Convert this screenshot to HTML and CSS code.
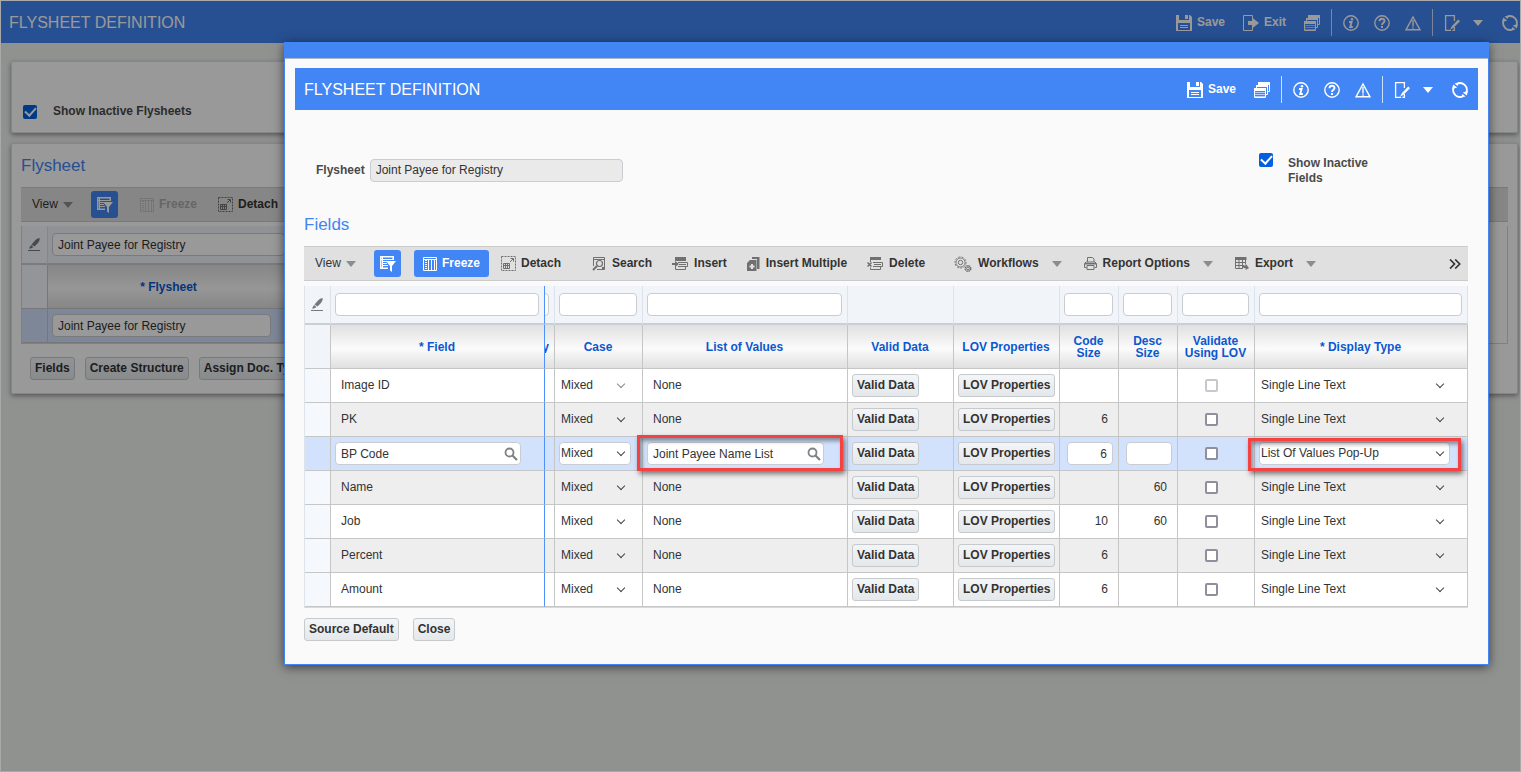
FILE: index.html
```html
<!DOCTYPE html>
<html lang="en">
<head>
    <meta charset="UTF-8">
    <meta name="viewport" content="width=device-width, initial-scale=1.0">
    <title>Flysheet Definition</title>
    <link rel="stylesheet" href="styles.css">
</head>
<body>
    <!-- Icon set -->
    <svg class="icon-defs" aria-hidden="true">
        <symbol id="i-save" viewBox="0 0 16 16">
            <path fill="currentColor" fill-rule="evenodd" d="M0 0h14l2 2v14H0zM3 0v5h10V0h-1v4H9V0zM2 8v7h12V8z"/>
            <path fill="currentColor" d="M4 10h8v1H4zM4 12h8v1H4z"/>
        </symbol>
        <symbol id="i-exit" viewBox="0 0 16 16">
            <path fill="none" stroke="currentColor" d="M9.500 4V.5h-9v15h9V12"/>
            <path fill="currentColor" d="M5 6h4V2.500l7 5.500-7 5.500V10H5z"/>
        </symbol>
        <symbol id="i-windows" viewBox="0 0 16 16">
            <path fill="none" stroke="currentColor" d="M4.500 3V.5h11v9H14M2.500 6V3.500h11v9H12M.5 6.500h11v9H.5z"/>
            <path fill="currentColor" d="M4 0h12v3H4zM2 3h12v2H2zM0 6h12v3H0z"/>
            <path fill="currentColor" opacity=".6" d="M1 10h10v1H1zM1 12h10v1H1zM1 14h10v1H1z"/>
        </symbol>
        <symbol id="i-info" viewBox="0 0 16 16">
            <circle cx="8" cy="8" r="7.200" fill="none" stroke="currentColor" stroke-width="1.400"/>
            <circle cx="9" cy="4.200" r="1.300" fill="currentColor"/>
            <path fill="none" stroke="currentColor" stroke-width="1.900" d="M6 7h2.600l-1.400 5h2.600"/>
        </symbol>
        <symbol id="i-help" viewBox="0 0 16 16">
            <circle cx="8" cy="8" r="7.200" fill="none" stroke="currentColor" stroke-width="1.400"/>
            <path fill="none" stroke="currentColor" stroke-width="1.900" d="M5.500 6.200C5.500 3 10.500 3 10.500 6 10.500 7.800 8 7.700 8 10"/>
            <path fill="currentColor" d="M7 11h2v2H7z"/>
        </symbol>
        <symbol id="i-warn" viewBox="0 0 16 16">
            <path fill="none" stroke="currentColor" stroke-width="1.400" d="M8 2L15 14.800H1z"/>
            <path fill="currentColor" d="M7.300 5h1.400v6.500H7.300zM7.300 12.300h1.400v1.500H7.300z"/>
        </symbol>
        <symbol id="i-edit" viewBox="0 0 16 16">
            <path fill="none" stroke="currentColor" stroke-width="1.300" d="M10.400 6V.7H1.600v14.600h5.500M10.400 12v3.300h-2"/>
            <path fill="currentColor" d="M14.200 4.500L16 6.200l-6.500 6.500-3.500 2 2-3.700z"/>
        </symbol>
        <symbol id="i-refresh" viewBox="0 0 16 16">
            <path fill="none" stroke="currentColor" stroke-width="1.800" d="M5 1.800A6.800 6.800 0 0 1 14.300 10.500M11 14.200A6.800 6.800 0 0 1 1.700 5.500"/>
            <path fill="currentColor" d="M0 7l1.200-4.500 4 3zM16 9l-1.200 4.500-4-3zM2.500 1.500L7 .5 5.500 4zM13.500 14.500L9 15.500l1.500-3.500z"/>
        </symbol>
        <symbol id="i-filter" viewBox="0 0 16 16">
            <path fill="none" stroke="currentColor" stroke-width="1.500" d="M13.200 4V.8H.8v11.400H8"/>
            <path fill="currentColor" d="M1 3h12v1H1zM3 5h5v1H3zM3 7h4v1H3zM3 9h5v1H3zM2 1h1v11H2zM6 5h10l-4 5v6l-2-1.500V10z"/>
        </symbol>
        <symbol id="i-freeze" viewBox="0 0 14 14">
            <path fill="none" stroke="currentColor" d="M.5.5h13v13H.5zM.5 2.500h13M5.500 3v10M8.500 3v10M11.500 3v10"/>
            <path fill="none" stroke="currentColor" stroke-width="2" stroke-dasharray="1 1" d="M3 3v10"/>
        </symbol>
        <symbol id="i-detach" viewBox="0 0 15 15">
            <path fill="none" stroke="currentColor" stroke-dasharray="2 1" d="M.5.5h14v14H.5z"/>
            <path fill="none" stroke="currentColor" d="M2.500 7.500h6v5h-6zM3 9.500h6M4.500 8v5M6.500 8v5M9 6l3-3M9.500 2.500h3v3"/>
        </symbol>
        <symbol id="i-search" viewBox="0 0 14 15">
            <path fill="none" stroke="currentColor" d="M1.500 10V1.500h11v12H5M2 3.500h10"/>
            <circle cx="7.500" cy="7.500" r="3" fill="none" stroke="currentColor" stroke-width="1.200"/>
            <path fill="none" stroke="currentColor" stroke-width="2" d="M5 10l-4 4"/>
            <path fill="currentColor" d="M10 11h2v2h-2z"/>
        </symbol>
        <symbol id="i-insert" viewBox="0 0 16 14">
            <path fill="currentColor" d="M3 0h11v4H3zM0 6h3V4l4 3-4 3V8H0z"/>
            <path fill="none" stroke="currentColor" d="M6 5.500h9.500v4H6M3.500 9v3.500h10V10M7 7.500h7"/>
        </symbol>
        <symbol id="i-multi" viewBox="0 0 13 14">
            <path fill="currentColor" fill-rule="evenodd" d="M5 0h7.500v12H10V2H5zM3 3h6.500v11H0V6zM4 7v1.500H2.500v2H4V12h2v-1.500h1.500v-2H6V7z"/>
        </symbol>
        <symbol id="i-delete" viewBox="0 0 16 14">
            <path fill="currentColor" d="M3 0h11v3H3z"/>
            <path fill="none" stroke="currentColor" d="M6 5.500h9.500v4H6M3.500 10.500v2h10V10M3.500 3v2M7 7.500h7"/>
            <path fill="none" stroke="currentColor" stroke-width="1.500" d="M.5 5.500l4 4M4.500 5.500l-4 4"/>
        </symbol>
        <symbol id="i-gears" viewBox="0 0 18 16">
            <circle cx="6.500" cy="6.500" r="5.500" fill="none" stroke="currentColor" stroke-dasharray="2 1.300"/>
            <circle cx="6.500" cy="6.500" r="4.500" fill="none" stroke="currentColor" stroke-width=".8"/>
            <circle cx="6.500" cy="6.500" r="2.200" fill="none" stroke="currentColor"/>
            <circle cx="14" cy="12.500" r="2.800" fill="none" stroke="currentColor" stroke-width="1.400" stroke-dasharray="1.600 .6"/>
            <circle cx="14" cy="12.500" r="1.400" fill="none" stroke="currentColor"/>
        </symbol>
        <symbol id="i-print" viewBox="0 0 13 13">
            <path fill="none" stroke="currentColor" d="M3.500 5V.5h5l1.500 1.500v3M2.500 10.500h-2v-4l1.500-1.500h9l1.500 1.500v4h-2M3 8.500h7v4H3z"/>
            <path fill="currentColor" d="M1 6h11v1.500H1z"/>
        </symbol>
        <symbol id="i-export" viewBox="0 0 14 13">
            <path fill="none" stroke="currentColor" d="M.5 1v10.500H8M4 2v9.500M7.500 2v9.500M10.500 2v5M1 5.500h10M1 8.500h8"/>
            <path fill="currentColor" d="M0 0h11.500v3H0zM7 8.500h3.500V6.500L14 11l-3.500 2v-2C8.500 11 7.500 10.500 7 8.500z"/>
        </symbol>
        <symbol id="i-pen" viewBox="0 0 12 13">
            <path fill="currentColor" d="M11.500 0c.6 2-.6 4-2 5.500L6.500 8.500l-3-2L7 2.500C8.500 1 10 .2 11.500 0zM3 7l2.500 2-2.500 1.500H1zM0 12h12v1H0z"/>
        </symbol>
        <symbol id="i-lens" viewBox="0 0 14 14">
            <circle cx="5.500" cy="5.500" r="4" fill="none" stroke="currentColor" stroke-width="1.800"/>
            <path stroke="currentColor" stroke-width="2.200" d="M8.500 8.500l4.500 4.500"/>
        </symbol>
        <symbol id="i-more" viewBox="0 0 12 10">
            <path fill="none" stroke="currentColor" stroke-width="1.700" d="M1 .5L5.500 5 1 9.500M6.200.5L10.700 5 6.200 9.500"/>
        </symbol>
    </svg>

    <!-- Main page -->
    <header class="title-bar title-bar-page">
        <h1>FLYSHEET DEFINITION</h1>
        <div class="title-actions">
            <button type="button" class="title-btn title-btn-text"><svg width="16" height="16"><use href="#i-save"/></svg>Save</button>
            <button type="button" class="title-btn title-btn-text"><svg width="16" height="16"><use href="#i-exit"/></svg>Exit</button>
            <button type="button" class="title-btn" aria-label="Windows"><svg width="16" height="16"><use href="#i-windows"/></svg></button>
            <span class="bar-line"></span>
            <button type="button" class="title-btn" aria-label="Information"><svg width="16" height="16"><use href="#i-info"/></svg></button>
            <button type="button" class="title-btn" aria-label="Help"><svg width="16" height="16"><use href="#i-help"/></svg></button>
            <button type="button" class="title-btn" aria-label="Warnings"><svg width="16" height="16"><use href="#i-warn"/></svg></button>
            <span class="bar-line"></span>
            <button type="button" class="title-btn" aria-label="Edit"><svg width="16" height="16"><use href="#i-edit"/></svg><span class="caret"></span></button>
            <button type="button" class="title-btn" aria-label="Refresh"><svg width="16" height="16"><use href="#i-refresh"/></svg></button>
        </div>
    </header>

    <main class="page">
        <section class="panel panel-options">
            <input type="checkbox" id="inactive-flysheets" checked>
            <label for="inactive-flysheets">Show Inactive Flysheets</label>
        </section>

        <section class="panel">
            <h2>Flysheet</h2>
            <div class="toolbar">
                <button type="button" class="tool tool-view">View<span class="caret"></span></button>
                <button type="button" class="tool tool-filter" aria-label="Query by example"><svg width="16" height="16"><use href="#i-filter"/></svg></button>
                <button type="button" class="tool tool-freeze" disabled><svg width="14" height="14"><use href="#i-freeze"/></svg>Freeze</button>
                <button type="button" class="tool"><svg width="15" height="15"><use href="#i-detach"/></svg>Detach</button>
            </div>
            <div class="grid-frame">
                <table class="grid flysheet-grid">
                    <colgroup><col class="w-mark"><col></colgroup>
                    <tr class="filter-row">
                        <td class="mark"><svg width="12" height="13"><use href="#i-pen"/></svg></td>
                        <td><input type="text" class="box" aria-label="Filter flysheet" value="Joint Payee for Registry"></td>
                    </tr>
                    <tr class="head-row">
                        <th class="mark"></th>
                        <th>* Flysheet</th>
                    </tr>
                    <tr class="selected">
                        <td class="mark"></td>
                        <td><input type="text" class="box flysheet-box" aria-label="Flysheet name" value="Joint Payee for Registry"></td>
                    </tr>
                </table>
            </div>
            <div class="panel-buttons">
                <button type="button" class="btn">Fields</button>
                <button type="button" class="btn">Create Structure</button>
                <button type="button" class="btn">Assign Doc. Types</button>
            </div>
        </section>
    </main>

    <div class="overlay"></div>

    <!-- Fields dialog -->
    <div class="dialog" role="dialog" aria-labelledby="dialog-title">
        <div class="dialog-bar"></div>
        <div class="dialog-body">
            <header class="title-bar">
                <h1 id="dialog-title">FLYSHEET DEFINITION</h1>
                <div class="title-actions">
                    <button type="button" class="title-btn title-btn-text"><svg width="16" height="16"><use href="#i-save"/></svg>Save</button>
                    <button type="button" class="title-btn" aria-label="Windows"><svg width="16" height="16"><use href="#i-windows"/></svg></button>
                    <span class="bar-line"></span>
                    <button type="button" class="title-btn" aria-label="Information"><svg width="16" height="16"><use href="#i-info"/></svg></button>
                    <button type="button" class="title-btn" aria-label="Help"><svg width="16" height="16"><use href="#i-help"/></svg></button>
                    <button type="button" class="title-btn" aria-label="Warnings"><svg width="16" height="16"><use href="#i-warn"/></svg></button>
                    <span class="bar-line"></span>
                    <button type="button" class="title-btn" aria-label="Edit"><svg width="16" height="16"><use href="#i-edit"/></svg><span class="caret"></span></button>
                    <button type="button" class="title-btn" aria-label="Refresh"><svg width="16" height="16"><use href="#i-refresh"/></svg></button>
                </div>
            </header>

            <div class="dialog-content">
                <div class="form-row">
                    <label for="flysheet">Flysheet</label>
                    <input type="text" id="flysheet" class="box" value="Joint Payee for Registry" readonly>
                    <div class="inactive">
                        <input type="checkbox" id="inactive-fields" checked>
                        <label for="inactive-fields">Show Inactive Fields</label>
                    </div>
                </div>

                <h2>Fields</h2>
                <div class="toolbar">
                    <button type="button" class="tool tool-view">View<span class="caret"></span></button>
                    <button type="button" class="tool tool-filter" aria-label="Query by example"><svg width="16" height="16"><use href="#i-filter"/></svg></button>
                    <button type="button" class="tool tool-freeze"><svg width="14" height="14"><use href="#i-freeze"/></svg>Freeze</button>
                    <button type="button" class="tool"><svg width="15" height="15"><use href="#i-detach"/></svg>Detach</button>
                    <button type="button" class="tool tool-search"><svg width="14" height="15"><use href="#i-search"/></svg>Search</button>
                    <button type="button" class="tool tool-row"><svg width="16" height="14"><use href="#i-insert"/></svg>Insert</button>
                    <button type="button" class="tool tool-row"><svg width="13" height="14"><use href="#i-multi"/></svg>Insert Multiple</button>
                    <button type="button" class="tool tool-row"><svg width="16" height="14"><use href="#i-delete"/></svg>Delete</button>
                    <button type="button" class="tool tool-menu tool-flows"><svg width="18" height="16"><use href="#i-gears"/></svg>Workflows<span class="caret"></span></button>
                    <button type="button" class="tool tool-menu"><svg width="13" height="13"><use href="#i-print"/></svg>Report Options<span class="caret"></span></button>
                    <button type="button" class="tool tool-menu"><svg width="14" height="13"><use href="#i-export"/></svg>Export<span class="caret"></span></button>
                    <button type="button" class="tool tool-more" aria-label="More"><svg width="12" height="10"><use href="#i-more"/></svg></button>
                </div>

                <table class="grid fields-grid">
                    <colgroup>
                        <col class="w-mark"><col class="w-field"><col class="w-cut"><col class="w-case"><col class="w-lov">
                        <col class="w-button"><col class="w-button"><col class="w-size"><col class="w-size"><col class="w-check"><col>
                    </colgroup>
                    <thead>
                        <tr class="filter-row">
                            <td class="mark"><svg width="12" height="13"><use href="#i-pen"/></svg></td>
                            <td class="frozen"><input type="text" class="box" aria-label="Filter field"></td>
                            <td class="cut"><div class="cut-clip"><input type="text" class="box" aria-label="Filter key"></div></td>
                            <td><input type="text" class="box" aria-label="Filter case"></td>
                            <td><input type="text" class="box" aria-label="Filter list of values"></td>
                            <td></td>
                            <td></td>
                            <td><input type="text" class="box" aria-label="Filter code size"></td>
                            <td><input type="text" class="box" aria-label="Filter desc size"></td>
                            <td><input type="text" class="box" aria-label="Filter validate"></td>
                            <td><input type="text" class="box" aria-label="Filter display type"></td>
                        </tr>
                        <tr class="head-row">
                            <th class="mark"></th>
                            <th class="frozen">* Field</th>
                            <th class="cut"><div class="cut-clip">y</div></th>
                            <th>Case</th>
                            <th>List of Values</th>
                            <th>Valid Data</th>
                            <th>LOV Properties</th>
                            <th>Code Size</th>
                            <th>Desc Size</th>
                            <th>Validate Using LOV</th>
                            <th>* Display Type</th>
                        </tr>
                    </thead>
                    <tbody>
                        <tr>
                            <td class="mark"></td>
                            <td class="frozen"><span class="text">Image ID</span></td>
                            <td></td>
                            <td><span class="pick pick-case pick-off"><select aria-label="Case" disabled><option>Mixed</option></select></span></td>
                            <td><span class="text">None</span></td>
                            <td><button type="button" class="btn">Valid Data</button></td>
                            <td><button type="button" class="btn">LOV Properties</button></td>
                            <td class="num"></td>
                            <td class="num"></td>
                            <td class="check"><input type="checkbox" aria-label="Validate using LOV" disabled></td>
                            <td><span class="pick pick-type"><select aria-label="Display type"><option>Single Line Text</option></select></span></td>
                        </tr>
                        <tr>
                            <td class="mark"></td>
                            <td class="frozen"><span class="text">PK</span></td>
                            <td></td>
                            <td><span class="pick pick-case"><select aria-label="Case"><option>Mixed</option></select></span></td>
                            <td><span class="text">None</span></td>
                            <td><button type="button" class="btn">Valid Data</button></td>
                            <td><button type="button" class="btn">LOV Properties</button></td>
                            <td class="num">6</td>
                            <td class="num"></td>
                            <td class="check"><input type="checkbox" aria-label="Validate using LOV"></td>
                            <td><span class="pick pick-type"><select aria-label="Display type"><option>Single Line Text</option></select></span></td>
                        </tr>
                        <tr class="selected">
                            <td class="mark"></td>
                            <td class="frozen"><span class="lookup lookup-field"><input type="text" class="box" aria-label="Field" value="BP Code"><button type="button" aria-label="Find field"><svg width="14" height="14"><use href="#i-lens"/></svg></button></span></td>
                            <td></td>
                            <td><span class="pick pick-case"><select aria-label="Case"><option>Mixed</option></select></span></td>
                            <td class="marked"><span class="lookup lookup-lov"><input type="text" class="box" aria-label="List of values" value="Joint Payee Name List"><button type="button" aria-label="Find list"><svg width="14" height="14"><use href="#i-lens"/></svg></button></span><span class="highlight highlight-lov"></span></td>
                            <td><button type="button" class="btn">Valid Data</button></td>
                            <td><button type="button" class="btn">LOV Properties</button></td>
                            <td class="num num-edit"><input type="text" class="box" aria-label="Code size" value="6"></td>
                            <td class="num num-edit"><input type="text" class="box" aria-label="Desc size"></td>
                            <td class="check"><input type="checkbox" aria-label="Validate using LOV"></td>
                            <td class="marked"><span class="pick pick-type"><select aria-label="Display type"><option>List Of Values Pop-Up</option></select></span><span class="highlight highlight-type"></span></td>
                        </tr>
                        <tr>
                            <td class="mark"></td>
                            <td class="frozen"><span class="text">Name</span></td>
                            <td></td>
                            <td><span class="pick pick-case"><select aria-label="Case"><option>Mixed</option></select></span></td>
                            <td><span class="text">None</span></td>
                            <td><button type="button" class="btn">Valid Data</button></td>
                            <td><button type="button" class="btn">LOV Properties</button></td>
                            <td class="num"></td>
                            <td class="num">60</td>
                            <td class="check"><input type="checkbox" aria-label="Validate using LOV"></td>
                            <td><span class="pick pick-type"><select aria-label="Display type"><option>Single Line Text</option></select></span></td>
                        </tr>
                        <tr>
                            <td class="mark"></td>
                            <td class="frozen"><span class="text">Job</span></td>
                            <td></td>
                            <td><span class="pick pick-case"><select aria-label="Case"><option>Mixed</option></select></span></td>
                            <td><span class="text">None</span></td>
                            <td><button type="button" class="btn">Valid Data</button></td>
                            <td><button type="button" class="btn">LOV Properties</button></td>
                            <td class="num">10</td>
                            <td class="num">60</td>
                            <td class="check"><input type="checkbox" aria-label="Validate using LOV"></td>
                            <td><span class="pick pick-type"><select aria-label="Display type"><option>Single Line Text</option></select></span></td>
                        </tr>
                        <tr>
                            <td class="mark"></td>
                            <td class="frozen"><span class="text">Percent</span></td>
                            <td></td>
                            <td><span class="pick pick-case"><select aria-label="Case"><option>Mixed</option></select></span></td>
                            <td><span class="text">None</span></td>
                            <td><button type="button" class="btn">Valid Data</button></td>
                            <td><button type="button" class="btn">LOV Properties</button></td>
                            <td class="num">6</td>
                            <td class="num"></td>
                            <td class="check"><input type="checkbox" aria-label="Validate using LOV"></td>
                            <td><span class="pick pick-type"><select aria-label="Display type"><option>Single Line Text</option></select></span></td>
                        </tr>
                        <tr>
                            <td class="mark"></td>
                            <td class="frozen"><span class="text">Amount</span></td>
                            <td></td>
                            <td><span class="pick pick-case"><select aria-label="Case"><option>Mixed</option></select></span></td>
                            <td><span class="text">None</span></td>
                            <td><button type="button" class="btn">Valid Data</button></td>
                            <td><button type="button" class="btn">LOV Properties</button></td>
                            <td class="num">6</td>
                            <td class="num"></td>
                            <td class="check"><input type="checkbox" aria-label="Validate using LOV"></td>
                            <td><span class="pick pick-type"><select aria-label="Display type"><option>Single Line Text</option></select></span></td>
                        </tr>
                    </tbody>
                </table>

                <div class="dialog-buttons">
                    <button type="button" class="btn">Source Default</button>
                    <button type="button" class="btn">Close</button>
                </div>
            </div>
        </div>
    </div>
</body>
</html>
```
FILE: styles.css
```css
* {
    margin: 0;
    padding: 0;
    box-sizing: border-box;
}

body {
    position: relative;
    min-height: 100vh;
    border: 1px solid #a9a9a9;
    background: #f0f3f1;
    font-family: "Liberation Sans", Arial, sans-serif;
    font-size: 12px;
    line-height: 15px;
    color: #333;
}

button,
input,
select {
    font: inherit;
    color: inherit;
}

button {
    border: none;
    background: none;
    cursor: pointer;
}

svg {
    display: block;
    flex: none;
}

.icon-defs {
    position: absolute;
    width: 0;
    height: 0;
}

h2 {
    font-size: 17px;
    font-weight: normal;
    line-height: 20px;
    color: #4285f4;
}

/* Title bars */
.title-bar {
    display: flex;
    justify-content: space-between;
    align-items: center;
    height: 42px;
    padding: 1px 10px 0 9px;
    background: #4285f4;
    color: #fff;
}

.title-bar-page {
    padding: 1px 2px 0 8px;
}

.title-bar h1 {
    font-size: 16px;
    font-weight: normal;
}

.title-actions {
    display: flex;
    align-items: center;
    gap: 15px;
}

.title-btn {
    display: flex;
    align-items: center;
    gap: 5px;
    font-weight: bold;
}

.title-btn-text {
    margin-right: 3px;
}

.title-btn .caret {
    margin: 0 4px 0 8px;
    border-width: 6px 5px 0;
    border-top-color: #fff;
}

.bar-line {
    width: 1px;
    height: 27px;
    margin: 0 -4px;
    background: #cfe0fc;
}

.caret {
    border: solid transparent;
    border-width: 6px 5px 0;
    border-top-color: #8a8d90;
}

/* Page panels */
.page {
    padding: 18px 2px 0 10px;
}

.panel {
    margin-bottom: 10px;
    padding: 12px 9px 13px;
    background: #fff;
    border: 1px solid #e0e0e0;
    border-radius: 2px;
    box-shadow: 0 2px 5px rgba(0, 0, 0, 0.4);
}

.panel-options {
    display: flex;
    align-items: center;
    gap: 16px;
    padding: 42px 11px 13px;
    font-weight: bold;
    color: #4a4a4a;
}

.panel h2 {
    margin-bottom: 11px;
}

.grid-frame {
    margin-top: 4px;
    border: solid #d0d7de;
    border-width: 0 1px 1px;
}

.panel-buttons {
    display: flex;
    gap: 10px;
    margin: 13px 0 0 9px;
}

/* Toolbar */
.toolbar {
    display: flex;
    align-items: center;
    height: 35px;
    padding-left: 11px;
    background: #e0e0e0;
    border: solid #cbcbcb;
    border-width: 1px 0;
}

.tool {
    display: flex;
    align-items: center;
    gap: 5px;
    flex: none;
    font-weight: bold;
}

.tool svg {
    color: #707070;
}

.tool-view {
    width: 59px;
    font-weight: normal;
}

.tool-filter {
    justify-content: center;
    width: 27px;
    height: 27px;
    background: #4285f4;
    border-radius: 3px;
}

.tool-freeze {
    justify-content: center;
    width: 75px;
    height: 27px;
    margin: 0 12px 0 13px;
    background: #4285f4;
    border-radius: 3px;
    color: #fff;
}

.tool-freeze:disabled {
    background: none;
    color: #aaa;
}

.tool-filter svg {
    color: #fff;
}

.tool-freeze svg {
    color: inherit;
}

.tool-freeze:disabled svg {
    color: #c4c4c4;
}

.tool-search,
.tool-row,
.tool-menu {
    gap: 6px;
}

.tool-search {
    margin-left: 31px;
}

.tool-row {
    margin-left: 20px;
}

.tool-menu {
    margin-left: 22px;
}

.tool-flows {
    margin-left: 29px;
}

.tool-menu .caret {
    margin-left: 7px;
}

.tool-more {
    margin: 0 7px 0 auto;
}

.tool-more svg {
    color: #333;
}

/* Form controls */
.btn {
    height: 23px;
    padding: 0 4px;
    border: 1px solid #c6cacd;
    border-radius: 3px;
    background: linear-gradient(#f3f5f7, #e4e8ea);
    font-weight: bold;
    white-space: nowrap;
}

.box {
    display: block;
    width: 100%;
    height: 23px;
    padding: 0 5px;
    border: 1px solid #c9ccd0;
    border-radius: 4px;
    background: #fff;
}

.box:read-only {
    background: #eaeaea;
}

input[type="checkbox"] {
    appearance: none;
    display: grid;
    place-items: center;
    flex: none;
    width: 13px;
    height: 13px;
    border: 2px solid #8f8f9d;
    border-radius: 2px;
    background: #fff;
}

input[type="checkbox"]:disabled {
    border-color: #c7c7ce;
}

input[type="checkbox"]:checked {
    width: 14px;
    height: 14px;
    border: none;
    background: #0060df;
}

input[type="checkbox"]:checked::after {
    content: "";
    width: 5px;
    height: 9px;
    margin-bottom: 2px;
    border: solid #fff;
    border-width: 0 2px 2px 0;
    transform: rotate(42deg);
}

.pick {
    display: grid;
    align-items: center;
    border: 1px solid transparent;
    border-radius: 4px;
}

.pick select {
    grid-area: 1 / 1;
    width: 100%;
    height: 21px;
    padding-left: 1px;
    border: none;
    background: none;
    appearance: none;
    opacity: 1;
}

.pick::after {
    content: "";
    grid-area: 1 / 1;
    justify-self: end;
    width: 5px;
    height: 5px;
    margin: 0 6px 3px 0;
    border: solid #444;
    border-width: 0 1px 1px 0;
    transform: rotate(45deg);
    pointer-events: none;
}

.pick-off::after {
    border-color: #888;
}

.pick-case {
    width: 72px;
}

.pick-type {
    width: 191px;
}

.lookup {
    display: grid;
    align-items: center;
}

.lookup .box,
.lookup button {
    grid-area: 1 / 1;
}

.lookup button {
    justify-self: end;
    margin-right: 3px;
    color: #7d8287;
}

.lookup-field {
    width: 186px;
}

.lookup-lov {
    width: 177px;
}

/* Grids */
.grid {
    width: 100%;
    table-layout: fixed;
    border-collapse: separate;
    border-spacing: 0;
}

.grid td,
.grid th {
    height: 34px;
    padding: 0 5px 0 4px;
    border: solid #c6c6c6;
    border-width: 0 1px 1px 0;
    vertical-align: middle;
}

.grid .filter-row td {
    height: 39px;
    background: #f1f4f9;
    border-color: #dce3ea;
    border-bottom: 2px solid #c9cfd4;
}

.grid .head-row th {
    height: 44px;
    background: linear-gradient(#e0e0e0, #fbfbfb 55%, #e0e0e0);
    line-height: 12px;
    color: #0b57d0;
}

.grid tbody tr:nth-child(odd) td {
    background: #fff;
}

.grid tbody tr:nth-child(even) td {
    background: #eee;
}

.grid .filter-row:nth-child(n) td {
    background: #f1f4f9;
}

.grid .mark,
.grid tbody tr:nth-child(n) .mark {
    background: #f5f8fd;
    color: #75797d;
}

.grid .head-row .mark {
    background: #f1f4f9;
}

.grid .mark svg {
    margin: 0 auto;
}

.grid tbody tr.selected:nth-child(n) td {
    background: #d3e2fc;
}

.selected .pick {
    background: #fff;
    border-color: #c9ccd0;
}

.w-mark {
    width: 26px;
}

.flysheet-grid {
    width: 269px;
}

.flysheet-box {
    width: 219px;
}

.fields-grid {
    margin-top: 5px;
    border-left: 1px solid #dce3ea;
    border-bottom: 1px solid #d5dade;
}

.w-field {
    width: 214px;
}

.w-cut {
    width: 10px;
}

.w-case {
    width: 88px;
}

.w-lov {
    width: 205px;
}

.w-button {
    width: 106px;
}

.w-size {
    width: 59px;
}

.w-check {
    width: 77px;
}

.grid tr .frozen,
.grid .filter-row .frozen {
    border-right: 1px solid #4d90fe;
}

/* column scrolled under the frozen edge */
.grid .cut {
    padding: 0;
}

.cut-clip {
    display: flex;
    justify-content: flex-end;
    width: 4px;
    overflow: hidden;
}

.cut-clip .box {
    flex: none;
    width: 40px;
}

.text {
    padding-left: 6px;
}

.grid .num {
    padding-right: 10px;
    text-align: right;
}

.grid .num-edit {
    padding: 0 5px 0 7px;
}

.num-edit .box {
    text-align: right;
}

.grid .check {
    padding-left: 27px;
}

.marked {
    position: relative;
}

.highlight {
    position: absolute;
    z-index: 1;
    border: 3px solid #f44242;
    box-shadow: 2px 3px 5px rgba(0, 0, 0, 0.5), inset 2px 3px 4px rgba(0, 0, 0, 0.4);
    pointer-events: none;
}

.highlight-lov {
    inset: -2px 4px -1px -6px;
}

.highlight-type {
    inset: 1px 6px -1px -7px;
}

/* Dialog */
.overlay {
    position: absolute;
    inset: 0;
    background: rgba(0, 0, 0, 0.4);
}

.dialog {
    position: absolute;
    top: 41px;
    left: 283px;
    right: 31px;
    border: 1px solid #4285f4;
    background: #fafafa;
    box-shadow: 0 2px 10px rgba(0, 0, 0, 0.6);
}

.dialog-bar {
    height: 16px;
    background: #4285f4;
    border-bottom: 1px solid #b0b8c4;
}

.dialog-body {
    padding: 9px 10px 23px;
}

.dialog-content {
    padding: 48px 10px 0 9px;
}

.form-row {
    display: flex;
    align-items: center;
    gap: 5px;
    height: 24px;
    padding-left: 12px;
    font-weight: bold;
    color: #4a4a4a;
}

.form-row .box {
    width: 253px;
    font-weight: normal;
    color: #333;
}

.inactive {
    display: flex;
    align-items: flex-start;
    gap: 15px;
    width: 209px;
    margin-left: auto;
}

.inactive label {
    width: 90px;
    padding: 3px 0 2px;
}

.dialog-content h2 {
    margin: 33px 0 11px;
}

.dialog-buttons {
    display: flex;
    gap: 14px;
    margin-top: 10px;
}
```
